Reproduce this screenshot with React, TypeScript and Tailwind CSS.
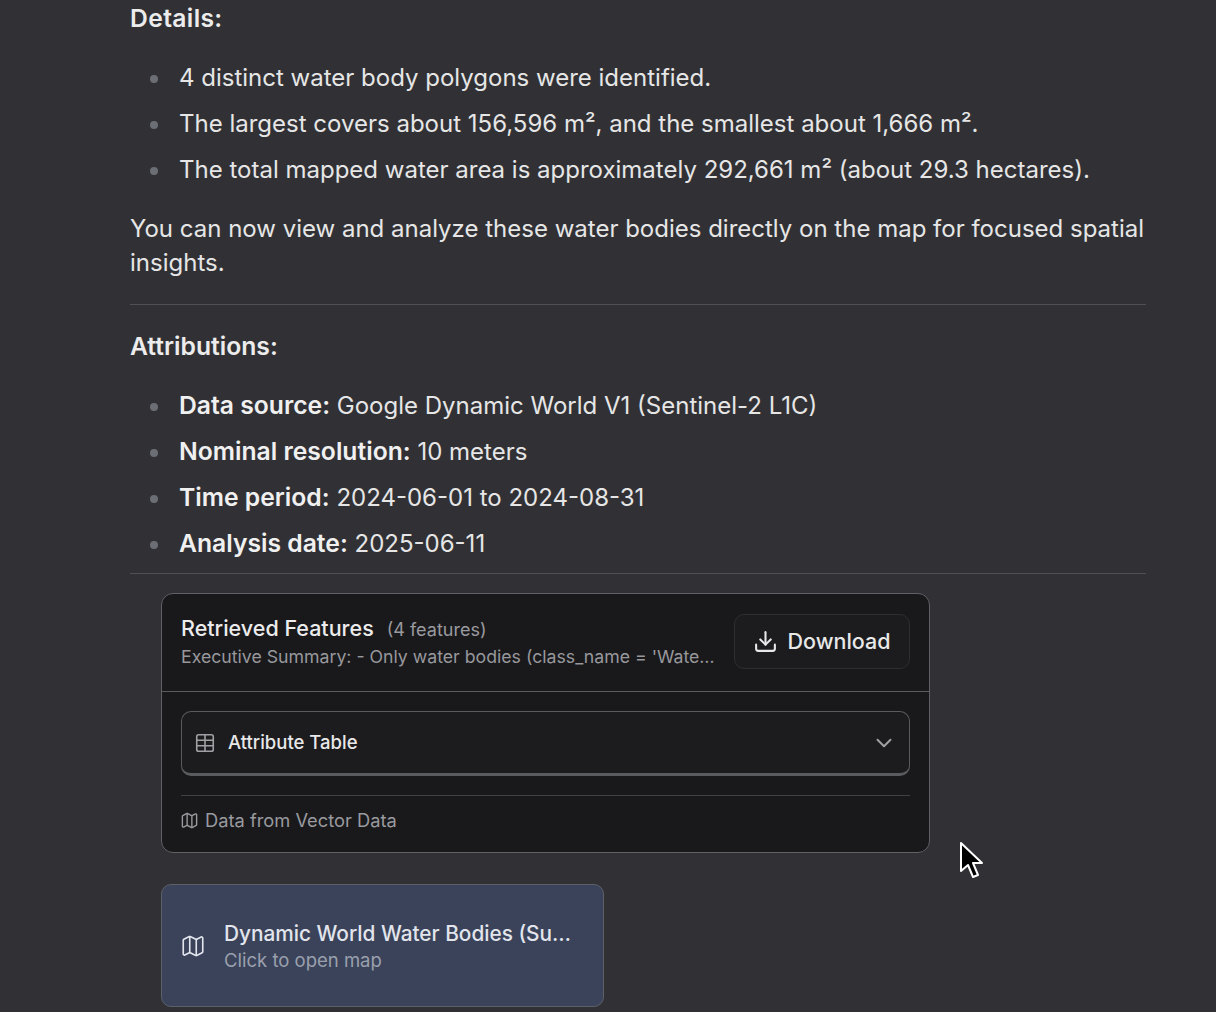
import { Download, Table, ChevronDown, Map as MapIcon } from "lucide-react";

const details = [
  "4 distinct water body polygons were identified.",
  "The largest covers about 156,596 m², and the smallest about 1,666 m².",
  "The total mapped water area is approximately 292,661 m² (about 29.3 hectares).",
];
const attributions = [
  ["Data source:", "Google Dynamic World V1 (Sentinel-2 L1C)"],
  ["Nominal resolution:", "10 meters"],
  ["Time period:", "2024-06-01 to 2024-08-31"],
  ["Analysis date:", "2025-06-11"],
];

function Item({ children }: { children: React.ReactNode }) {
  return (
    <li className="flex h-[46px] items-center">
      <span className="ml-[20px] mr-[21px] mt-[2px] h-[8px] w-[8px] rounded-full bg-[#6b6e75]" />
      <span>{children}</span>
    </li>
  );
}

export default function App() {
  return (
    <div className="relative h-[1012px] overflow-hidden bg-[#313135] pl-[130px] pr-[70px] font-['Inter',sans-serif] text-[24px] text-[#e6e6e6]">
      <p className="flex h-[38px] items-center text-[24.7px] font-semibold tracking-[0.35px] text-[#ececec]">Details:</p>
      <ul className="mt-[-1px] pt-[18px]">
        {details.map((d) => (
          <Item key={d}>{d}</Item>
        ))}
      </ul>
      <p className="pt-[19px] leading-[34px]">
        You can now view and analyze these water bodies directly on the map for focused spatial insights.
      </p>
      <hr className="mt-[24px] border-0 border-t border-[#505155]" />
      <p className="flex h-[84px] items-center text-[24.7px] font-semibold text-[#ececec]">Attributions:</p>
      <ul className="mt-[-6px]">
        {attributions.map(([k, v]) => (
          <Item key={k}>
            <strong className="text-[24.7px] font-semibold text-[#f0f0f0]">{k}</strong> {v}
          </Item>
        ))}
      </ul>
      <hr className="mt-[6px] border-0 border-t border-[#505155]" />

      <section className="ml-[31px] mt-[19px] w-[769px] rounded-[12px] border border-[#606165] bg-[#19191c]">
        <div className="flex h-[98px] items-center justify-between border-b border-[#5a5b5f] pb-[2px] pl-[19px] pr-[19px]">
          <div className="min-w-0 w-[540px]">
            <div className="flex items-baseline gap-[13px]">
              <span className="text-[21.5px] font-medium text-[#ececec]">Retrieved Features</span>
              <span className="text-[18px] text-[#9a9a9f]">(4 features)</span>
            </div>
            <p className="truncate text-[17.7px] text-[#98989c]">
              Executive Summary: - Only water bodies (class_name = 'Water') were retained
            </p>
          </div>
          <button className="flex h-[55px] w-[176px] items-center justify-center gap-[9px] rounded-[10px] border border-[#2e2e32] bg-[#1c1c1f] text-[21.5px] font-medium text-[#e8e8e8]">
            <Download size={25} strokeWidth={2} />
            Download
          </button>
        </div>
        <div className="px-[19px] pt-[19px]">
          <div className="flex h-[65px] items-center justify-between rounded-[10px] border border-b-[3px] border-[#5a5b5f] bg-[#1c1c1f] pl-[12px] pr-[12px]">
            <div className="flex items-center gap-[12px]">
              <Table size={22} className="text-[#a0a0a5]" strokeWidth={1.75} />
              <span className="text-[18.5px] font-medium text-[#e8e8e8]">Attribute Table</span>
            </div>
            <ChevronDown size={26} className="text-[#a0a0a5]" strokeWidth={1.8} />
          </div>
          <div className="mt-[19px] flex h-[57px] items-center gap-[6px] border-t border-[#3f4044] pb-[7px] text-[18.3px] text-[#9a9a9f]">
            <MapIcon size={19} strokeWidth={1.75} className="ml-[-1px]" />
            <span>Data from Vector Data</span>
          </div>
        </div>
      </section>

      <button className="ml-[31px] mt-[31px] flex h-[123px] w-[443px] items-center gap-[18px] rounded-[10px] border border-[#5c6068] bg-[#3a435a] pl-[18px] text-left">
        <MapIcon size={26} strokeWidth={1.5} className="shrink-0 text-[#e2e5ec]" />
        <span className="min-w-0 w-[350px] pt-[1px]">
          <span className="block truncate text-[20.8px] font-medium leading-[28px] text-[#e2e5ec]">
            Dynamic World Water Bodies (Summer 2024)
          </span>
          <span className="block text-[18.5px] leading-[25px] text-[#9aa0ad]">Click to open map</span>
        </span>
      </button>

      <svg className="absolute left-[958px] top-[840px]" width="28" height="40" viewBox="0 0 28 40">
        <path d="M3 3 L3 31 L10 25 L15 37 L20 35 L15 23 L24 23 Z" fill="#000" stroke="#fff" strokeWidth="2" strokeLinejoin="round" />
      </svg>
    </div>
  );
}
